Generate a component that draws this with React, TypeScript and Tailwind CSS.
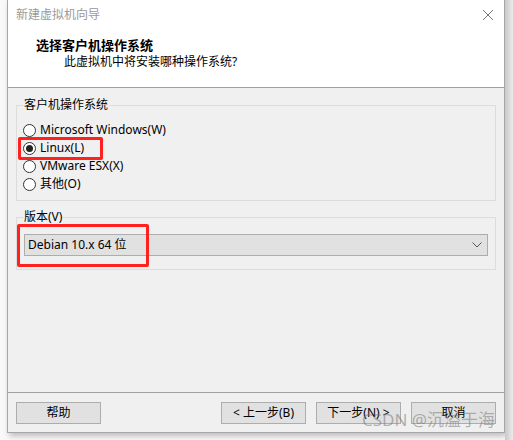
import React from "react";

const font = { fontFamily: '"Noto Sans", "Noto Sans CJK SC", sans-serif' };

function Radio({ label, checked }: { label: string; checked?: boolean }) {
  return (
    <div className="flex items-center h-[18px]">
      <div className="w-[13px] h-[13px] rounded-full border border-[#333333] bg-white flex items-center justify-center ml-[6px]">
        {checked && <div className="w-[7px] h-[7px] rounded-full bg-[#222222]" />}
      </div>
      <span className="ml-[4px] text-[12px] text-black leading-[18px]">{label}</span>
    </div>
  );
}

function Btn({ label, className = "" }: { label: string; className?: string }) {
  return (
    <button className={"w-[85px] h-[22px] bg-[#e1e1e1] border border-[#adadad] text-[12px] text-black leading-none flex items-center justify-center " + className}>
      {label}
    </button>
  );
}

export default function App() {
  return (
    <div className="w-[513px] h-[440px] bg-[#f9f9f9] flex relative overflow-hidden" style={font}>
      <div className="w-[7px] shrink-0" />
      <div className="w-[498px] h-[433px] shrink-0 border border-t-0 border-[#a6a6a6] bg-[#f0f0f0] flex flex-col shadow-[2px_3px_6px_rgba(0,0,0,0.25)]">
        <div className="h-[88px] bg-white border-b border-[#a0a0a0] flex flex-col">
          <div className="h-[30px] flex items-center justify-between pl-[8px] pr-[8px]">
            <span className="text-[12px] text-[#9a9a9a]">新建虚拟机向导</span>
            <svg width="12" height="12" viewBox="0 0 12 12" className="mr-[2px]">
              <path d="M1 1 L11 11 M11 1 L1 11" stroke="#7a7a7a" strokeWidth="1" />
            </svg>
          </div>
          <div className="pl-[28px] mt-[6px] text-[13px] font-bold text-black leading-[18px]">选择客户机操作系统</div>
          <div className="pl-[56px] text-[12px] text-black leading-[16px]">此虚拟机中将安装哪种操作系统?</div>
        </div>

        <div className="flex-1 flex flex-col px-[8px]">
          <fieldset className="mt-[9px] w-[480px] border border-[#dcdcdc] px-[0px] pb-[7px]">
            <legend className="ml-[6px] px-[1px] text-[12px] text-black leading-[16px]">客户机操作系统</legend>
            <div className="mt-[8px] flex flex-col">
              <Radio label="Microsoft Windows(W)" />
              <Radio label="Linux(L)" checked />
              <Radio label="VMware ESX(X)" />
              <Radio label="其他(O)" />
            </div>
          </fieldset>

          <fieldset className="mt-[8px] w-[480px] border border-[#dcdcdc] px-[7px] pb-[13px]">
            <legend className="ml-[-1px] px-[1px] text-[12px] text-black leading-[16px]">版本(V)</legend>
            <div className="mt-[9px] h-[22px] bg-[#e1e1e1] border border-[#adadad] flex items-center justify-between pl-[3px] pr-[5px]">
              <span className="text-[12px] text-black">Debian 10.x 64 位</span>
              <svg width="10" height="6" viewBox="0 0 10 6">
                <path d="M0.5 0.5 L5 5 L9.5 0.5" fill="none" stroke="#555555" strokeWidth="1" />
              </svg>
            </div>
          </fieldset>

          <div className="flex-1" />
        </div>

        <div className="border-t border-[#a0a0a0] h-[40px] flex items-start pt-[9px] px-[8px]">
          <Btn label="帮助" />
          <div className="flex-1" />
          <Btn label="< 上一步(B)" />
          <Btn label="下一步(N) >" className="ml-[10px]" />
          <Btn label="取消" className="ml-[10px]" />
        </div>
      </div>
      <div className="flex-1 bg-gradient-to-r from-[#c8c8c8] to-[#ececec]" />

      <div className="absolute left-[18px] top-[137px] w-[85px] h-[23px] border-[3px] border-[#ff2020] rounded-[2px]" />
      <div className="absolute left-[17px] top-[224px] w-[132px] h-[43px] border-[3px] border-[#ff2020] rounded-[2px]" />
      <div className="absolute left-[362px] top-[408px] text-[17px] leading-[24px] text-[rgba(120,120,120,0.55)] whitespace-nowrap">CSDN @沉溢于海</div>
    </div>
  );
}
